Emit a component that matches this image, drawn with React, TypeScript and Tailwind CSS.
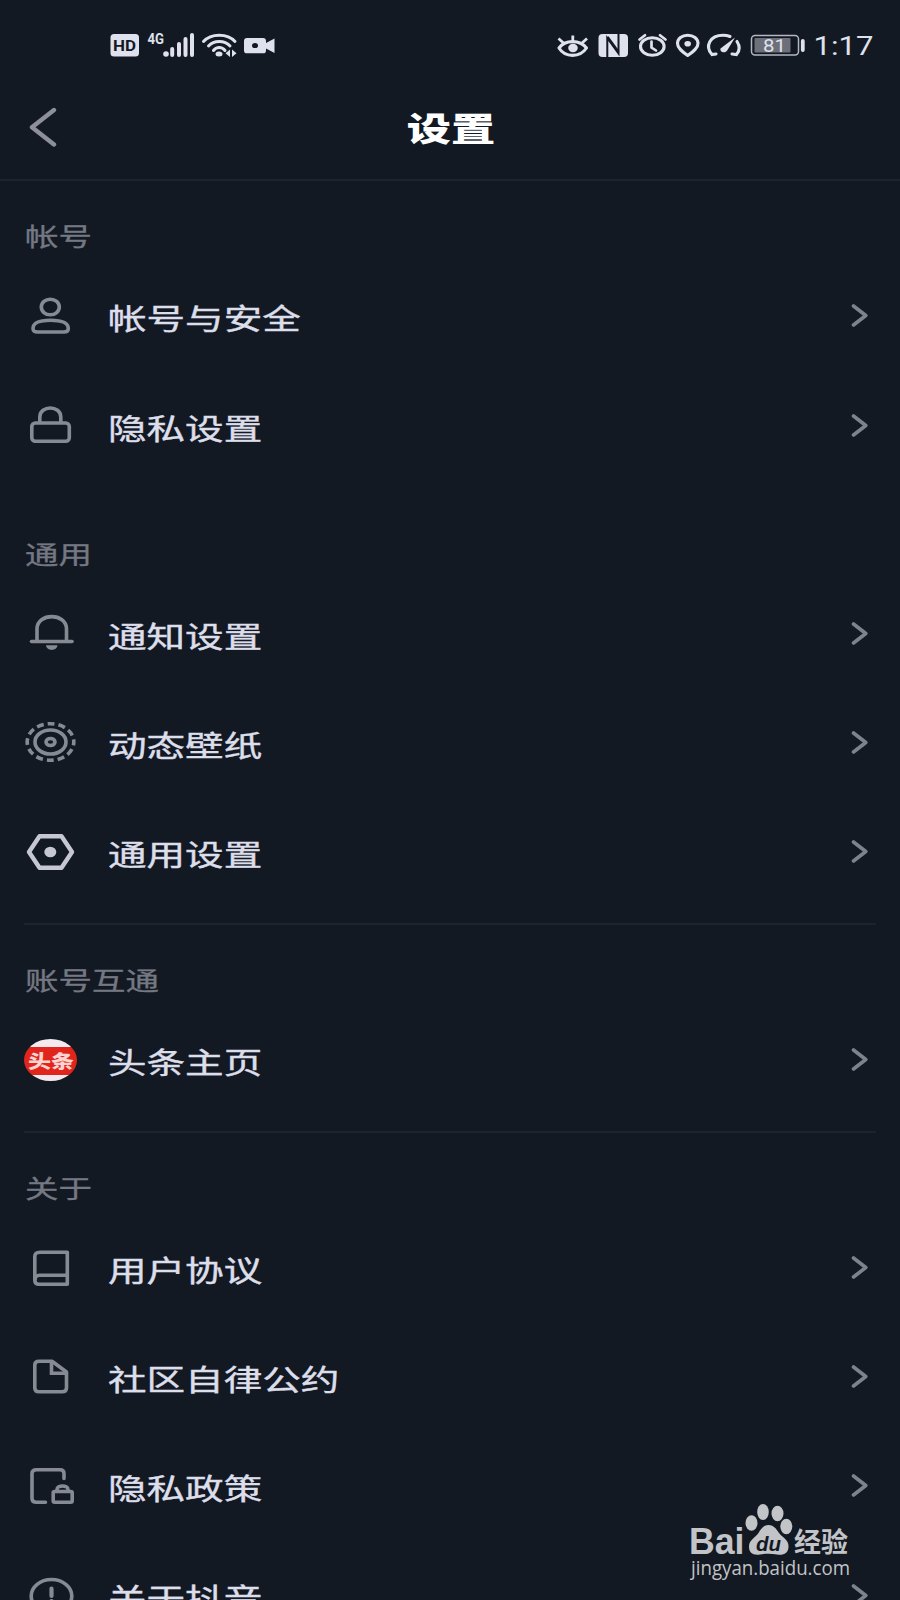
import React from "react";

type IconName = "user" | "lock" | "bell" | "wallpaper" | "general" | "toutiao" | "book" | "file" | "policy" | "info";

type Item = {
    label: string;
    icon: IconName;
}

type SectionData = {
    title: string;
    items: Item[];
    border: string;
}

const sections: SectionData[] = [
    {
        title: "帐号",
        border: "border-[#1c232d]",
        items: [
            { label: "帐号与安全", icon: "user" },
            { label: "隐私设置", icon: "lock" },
        ],
    },
    {
        title: "通用",
        border: "border-transparent",
        items: [
            { label: "通知设置", icon: "bell" },
            { label: "动态壁纸", icon: "wallpaper" },
            { label: "通用设置", icon: "general" },
        ],
    },
    {
        title: "账号互通",
        border: "mx-6 border-[#1c232d]",
        items: [{ label: "头条主页", icon: "toutiao" }],
    },
    {
        title: "关于",
        border: "mx-6 border-[#1c232d]",
        items: [
            { label: "用户协议", icon: "book" },
            { label: "社区自律公约", icon: "file" },
            { label: "隐私政策", icon: "policy" },
            { label: "关于抖音", icon: "info" },
        ],
    },
]

// every row icon is drawn on the same 60x50 grid
const icons: Record<IconName, React.ReactNode> = {
    user: (
        <>
            <ellipse cx="30.3" cy="16" rx="9" ry="7.8" />
            <path d="M13 37.5C13 31.5 21 29.3 30.5 29.3S48.3 31.5 48.3 37.5C48.3 40 46.5 41 44 41H17.5C14.8 41 13 40 13 37.5Z" />
        </>
    ),
    lock: (
        <>
            <rect x="11.8" y="23" width="37.5" height="18.3" rx="3.5" />
            <path d="M19.8 23V17C19.8 5 40.8 5 40.8 17V23" />
        </>
    ),
    bell: (
        <>
            <path d="M11.5 33.5H52" strokeLinecap="round" />
            <path d="M17 33V21C17 4.5 46.500 4.5 46.500 21V33" />
            <path d="M26 37.3H37.500C37 43.500 26.500 43.500 26 37.3Z" fill="currentColor" stroke="none" />
        </>
    ),
    wallpaper: (
        <>
            <ellipse cx="30.5" cy="25" rx="23.3" ry="18.3" strokeDasharray="6.9 4.02" strokeDashoffset="3.4" />
            <ellipse cx="30.5" cy="25" rx="15.500" ry="12" />
            <ellipse cx="30.5" cy="25" rx="4.5" ry="3.500" />
        </>
    ),
    general: (
        <>
            <path d="M19.5 9.300H41.500L52 25L41.500 40.700H19.5L9 25Z" strokeWidth="4.400" strokeLinejoin="round" />
            <ellipse cx="30.3" cy="25" rx="6" ry="5.3" fill="currentColor" stroke="none" />
        </>
    ),
    toutiao: null,
    book: (
        <>
            <path d="M20 9.300H47.300V41.300H19C16 41.300 14.800 39.500 14.800 37V13.500C14.800 11 16.500 9.300 20 9.300Z" strokeLinejoin="round" />
            <path d="M15 37C15 34 16.500 32.300 19.500 32.300H47" />
        </>
    ),
    file: (
        <>
            <path d="M19 9.300H32L46.500 20V36C46.500 38.500 45 39.800 42 39.800H19C16 39.800 14.800 38.500 14.800 36V13C14.800 10.500 16 9.300 19 9.300Z" strokeLinejoin="round" />
            <path d="M31.500 10V21.300H46" />
        </>
    ),
    policy: (
        <>
            <path d="M25.500 41.200H16.500C13.500 41.200 12 40 12 37.500V12.500C12 10 13.500 8.800 16.500 8.800H40C42.500 8.800 44 10 44 12.500V17.500" strokeLinecap="round" />
            <rect x="33.200" y="30.500" width="19" height="10.800" rx="1.500" />
            <path d="M37 30V28.500C37 23.800 48 23.800 48 28.500V30" />
        </>
    ),
    info: (
        <>
            <ellipse cx="31.500" cy="26" rx="20.3" ry="16.5" />
            <path d="M31.500 18.500V26M31.500 31V33" strokeWidth="4.200" strokeLinecap="round" />
        </>
    ),
}

function RowIcon({ name }: { name: IconName })
{
    if (name === "toutiao")
    {
        return (
            <div className="flex h-[50px] w-[60px] items-center justify-center">
                <div className="ml-px flex h-[42px] w-[53px] items-center justify-center overflow-hidden rounded-[50%] bg-[linear-gradient(#f3e9ee_0_18%,#e0251c_18%_85%,#f3e9ee_85%)]">
                    <span className="scale-x-[1.28] text-[18px] leading-[20px] font-black whitespace-nowrap text-[#ffd3d0]">头条</span>
                </div>
            </div>
        )
    }
    return (
        <svg
            viewBox="0 0 60 50"
            className={name === "general" ? "h-[50px] w-[60px] text-[#c5c7d3]" : "h-[50px] w-[60px] text-[#868a93]"}
            fill="none"
            stroke="currentColor"
            strokeWidth="3.6"
        >
            {icons[name]}
        </svg>
    )
}

function Row({ item, inset }: { item: Item, inset: boolean })
{
    return (
        <div className={inset ? "-mx-6 flex h-[109.2px] items-center pr-8 pl-5" : "flex h-[109.2px] items-center pr-8 pl-5"}>
            <RowIcon name={item.icon} />
            <span className="mt-[3px] ml-7 origin-left scale-x-[1.325] text-[29.1px] leading-10 text-[#dcdeea] [-webkit-text-stroke:0.4px_#dcdeea]">{item.label}</span>
            <svg viewBox="0 0 17 23" className="ml-auto h-[23px] w-[17px]" fill="none" stroke="#7e828c" strokeWidth="3.6" strokeLinecap="round" strokeLinejoin="round">
                <path d="M2.500 2L14.800 11.500L2.500 21" />
            </svg>
        </div>
    )
}

function Section({ section }: { section: SectionData })
{
    const inset = section.border.startsWith("mx-6");
    return (
        <section className={`border-t-2 pb-[16.8px] ${section.border}`}>
            <div className={inset ? "h-20 pt-[34px] pl-px" : "h-20 pt-[34px] pl-[25px]"}>
                <h2 className="w-fit origin-left scale-x-[1.345] text-[24.9px] leading-10 text-[#747883] [-webkit-text-stroke:0.3px_#747883]">{section.title}</h2>
            </div>
            {section.items.map((item) => <Row key={item.label} item={item} inset={inset} />)}
        </section>
    )
}

function StatusBar()
{
    return (
        <div className="flex h-[91px] items-center justify-between pr-[27px] pb-0.5 pl-[110px] text-[#dfe1ee]">
            {/* network side */}
            <svg viewBox="110 30 166 30" className="h-[30px] w-[166px]" fill="none" stroke="currentColor" strokeWidth="3">
                <rect x="110.500" y="34" width="28.500" height="22.500" rx="3.500" fill="currentColor" stroke="none" />
                <text x="113" y="50.700" fontSize="15" fontWeight="700" textLength="23" lengthAdjust="spacingAndGlyphs" fill="#131922" stroke="none" className="font-[Roboto]">HD</text>
                <text x="147.500" y="44.200" fontSize="14" fontWeight="700" textLength="16.500" lengthAdjust="spacingAndGlyphs" fill="currentColor" stroke="none" className="font-[Roboto]">4G</text>
                <ellipse cx="166" cy="54" rx="2.800" ry="2.700" fill="currentColor" stroke="none" />
                <path d="M172.200 49V55M179 44V55M185.500 39V55M192 35V55" strokeWidth="4" strokeLinecap="round" />
                <path d="M203.500 41.500C211 33 227.500 33 235 41.500M208.500 46C214 40 224.500 40 230 46M213.500 50.500C216.500 46.500 222 46.500 225 50.500" strokeWidth="3" strokeLinecap="round" />
                <ellipse cx="219" cy="54" rx="3.500" ry="2.500" fill="currentColor" stroke="none" />
                <path d="M230 49.500V57L225.500 53.300ZM232 49.500V57L236.500 53.300Z" fill="currentColor" stroke="none" />
                <path d="M247 38H263C265 38 266 39 266 41V43L274.500 38.500V53L266 48.500V50.500C266 52.500 265 53.300 263 53.300H247C245 53.300 244 52.500 244 50.500V41C244 39 245 38 247 38Z" fill="currentColor" stroke="none" />
                <ellipse cx="255" cy="45.500" rx="3" ry="2.600" fill="#131922" stroke="none" />
            </svg>

            <div className="flex items-center">
                <svg viewBox="555 30 254 30" className="h-[30px] w-[254px]" fill="none" stroke="currentColor" strokeWidth="3.100">
                    {/* eye comfort */}
                    <path d="M559 48C565 39.500 580 39.500 586.500 48C580 57.800 565 57.800 559 48Z" strokeLinejoin="round" />
                    <ellipse cx="573" cy="48" rx="4.800" ry="4.200" fill="currentColor" stroke="none" />
                    <path d="M572.800 41V35.500M563.500 43L558.500 38.500M582 43L587 38.500" strokeWidth="2.800" />
                    {/* nfc */}
                    <rect x="598.500" y="34" width="29.500" height="23" rx="4" fill="currentColor" stroke="none" />
                    <path d="M607.300 57V38L618.500 53.500V34" stroke="#131922" strokeWidth="2" />
                    <path d="M607.500 37L618.500 52" stroke="#131922" strokeWidth="2.500" />
                    {/* alarm */}
                    <ellipse cx="652.300" cy="46.500" rx="11.800" ry="8.800" />
                    <path d="M639.500 39.500L645 35.300M665.500 39.500L660 35.300M651.500 41.500V47.500L656 50.500" strokeWidth="2.700" strokeLinecap="round" />
                    {/* location */}
                    <path d="M687.700 55.500C682 51.500 677.500 48 677.500 43.500C677.500 38.500 682 35.300 687.700 35.300S698 38.500 698 43.500C698 48 693.500 51.500 687.700 55.500Z" strokeLinejoin="round" />
                    <ellipse cx="687.700" cy="43.800" rx="3.300" ry="2.800" fill="currentColor" stroke="none" />
                    {/* performance gauge */}
                    <path d="M716 54L712 54.500C704.500 46 710 35.200 723 35.200C726 35.200 728 35.700 730 36.500M737 41.500C740 46 740 50.500 736.500 54.500L732 54" strokeLinecap="round" />
                    <path d="M735 37.500L720.500 48.500C719.500 52.500 725.500 54 727.500 50Z" fill="currentColor" stroke="none" />
                    {/* battery */}
                    <rect x="751.500" y="35.500" width="47" height="19.500" rx="3.500" strokeWidth="1.500" stroke="#b4b6c1" />
                    <rect x="754.500" y="38" width="36" height="14.500" rx="1" fill="#6d7079" stroke="none" />
                    <path d="M802.800 41V50" strokeWidth="3.800" strokeLinecap="round" />
                    <text x="763" y="51.800" fontSize="18" fontWeight="400" textLength="23" lengthAdjust="spacingAndGlyphs" fill="currentColor" stroke="none" className="font-[Roboto]">81</text>
                </svg>
                <svg viewBox="0 0 64 30" className="h-[30px] w-[64px]">
                    <text x="4.500" y="25" fontSize="26" textLength="60" lengthAdjust="spacingAndGlyphs" fill="currentColor" className="font-[Roboto]">1:17</text>
                </svg>
            </div>
        </div>
    )
}

function Header()
{
    return (
        <header className="grid h-[88.4px] grid-cols-3 items-center pb-4">
            <svg viewBox="0 0 28 40" className="ml-[29px] h-10 w-7" fill="none" stroke="#8d9099" strokeWidth="4.400" strokeLinecap="round" strokeLinejoin="round">
                <path d="M25 3L3 20.300L25 37.500" />
            </svg>
            <h1 className="ml-0.5 scale-x-[1.32] text-center text-[33.5px] leading-10 font-black text-white">设置</h1>
        </header>
    )
}

function Watermark()
{
    return (
        <div className="absolute top-[1500px] left-[686px] text-[#c2c4c8]">
            <svg viewBox="686 1500 170 90" className="h-[90px] w-[170px]" fill="currentColor">
                <text x="689" y="1553.500" fontSize="37" fontWeight="700" textLength="55.500" lengthAdjust="spacingAndGlyphs" className="font-[Liberation_Sans]">Bai</text>
                <ellipse cx="751.500" cy="1523" rx="6" ry="7.800" />
                <ellipse cx="763" cy="1512" rx="5.800" ry="8" />
                <ellipse cx="777.500" cy="1513.500" rx="6" ry="7.800" />
                <ellipse cx="786.300" cy="1526.500" rx="6" ry="7.800" />
                <path d="M768.500 1525C773 1525 776 1528 779 1533C783 1538 789 1540 788.500 1547C788 1554 783 1555.500 777 1554.500C771 1553.500 766 1553.500 760 1554.500C753 1555.500 749 1553 749 1546.500C749 1540 755 1538 758.500 1533C761.500 1528 764 1525 768.500 1525Z" />
                <text x="756" y="1550.500" fontSize="21" fontWeight="700" fontStyle="italic" textLength="25" lengthAdjust="spacingAndGlyphs" fill="#131922" className="font-[Liberation_Sans]">du</text>
                <text x="794" y="1551.500" fontSize="27" fontWeight="700">经验</text>
                <text x="691" y="1575" fontSize="20" textLength="159" lengthAdjust="spacingAndGlyphs" className="font-[Open_Sans]">jingyan.baidu.com</text>
            </svg>
        </div>
    )
}

function App()
{
    return (
        <div className="relative h-[1600px] w-[900px] overflow-hidden bg-[#131922] font-['Noto_Sans_CJK_SC',sans-serif]">
            <StatusBar />
            <Header />
            <main>
                {sections.map((section) => <Section key={section.title} section={section} />)}
            </main>
            <Watermark />
        </div>
    )
}

export default App;
